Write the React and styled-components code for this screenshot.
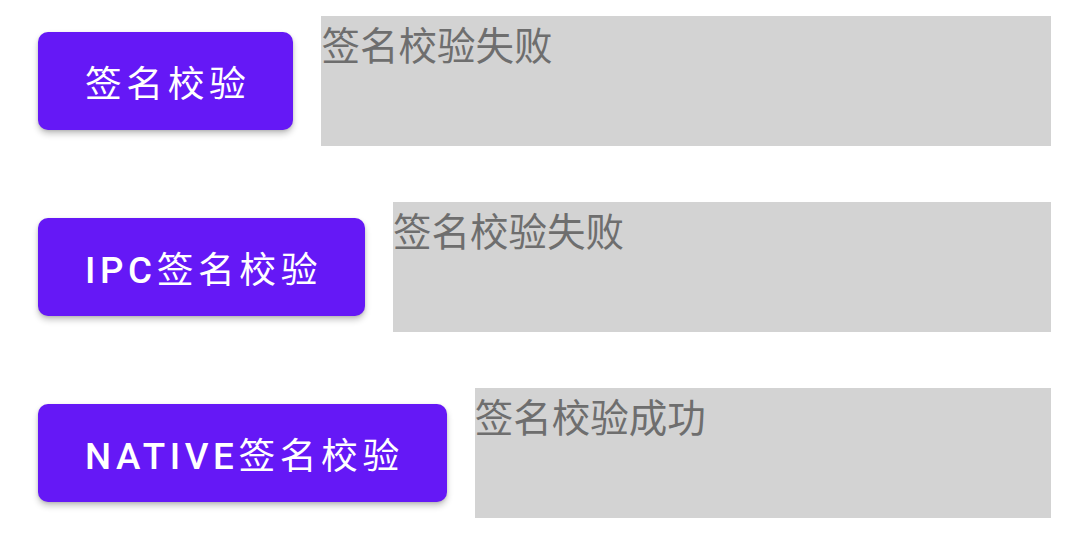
import React from "react";
import styled, { createGlobalStyle } from "styled-components";

const Global = createGlobalStyle`
  html, body { margin: 0; padding: 0; background: #ffffff; }
  body { font-family: Roboto, "Noto Sans CJK SC", sans-serif; }
`;

const Page = styled.div`
  display: flex;
  flex-direction: column;
  gap: 56px;
  padding: 16px 29px 0 38px;
`;

const Row = styled.div`
  display: flex;
  align-items: center;
  gap: 28px;
`;

const Button = styled.button`
  flex: none;
  height: 98px;
  padding: 0 43px 0 47px;
  border: none;
  border-radius: 10px;
  background: #6518f6;
  color: #ffffff;
  font-family: Roboto, "Noto Sans CJK SC", sans-serif;
  font-size: 36.75px;
  font-weight: 500;
  letter-spacing: 4.6px;
  box-shadow: 0 4px 6px rgba(0, 0, 0, 0.22), 0 1px 3px rgba(0, 0, 0, 0.12);
  cursor: pointer;
`;

const Cjk = styled.span`
  font-weight: 400;
`;

const Result = styled.div`
  flex: 1;
  height: 130px;
  background: #d3d3d3;
  color: #6e6e6e;
  font-family: Roboto, "Noto Sans CJK SC", sans-serif;
  font-size: 38.5px;
  line-height: 1.6;
`;

const rows = [
  { prefix: "", label: "签名校验", result: "签名校验失败" },
  { prefix: "IPC", label: "签名校验", result: "签名校验失败" },
  { prefix: "NATIVE", label: "签名校验", result: "签名校验成功" },
];

export default function App() {
  return (
    <>
      <Global />
      <Page>
        {rows.map((r) => (
          <Row key={r.prefix + r.label}>
            <Button>
              {r.prefix}
              <Cjk>{r.label}</Cjk>
            </Button>
            <Result>{r.result}</Result>
          </Row>
        ))}
      </Page>
    </>
  );
}
